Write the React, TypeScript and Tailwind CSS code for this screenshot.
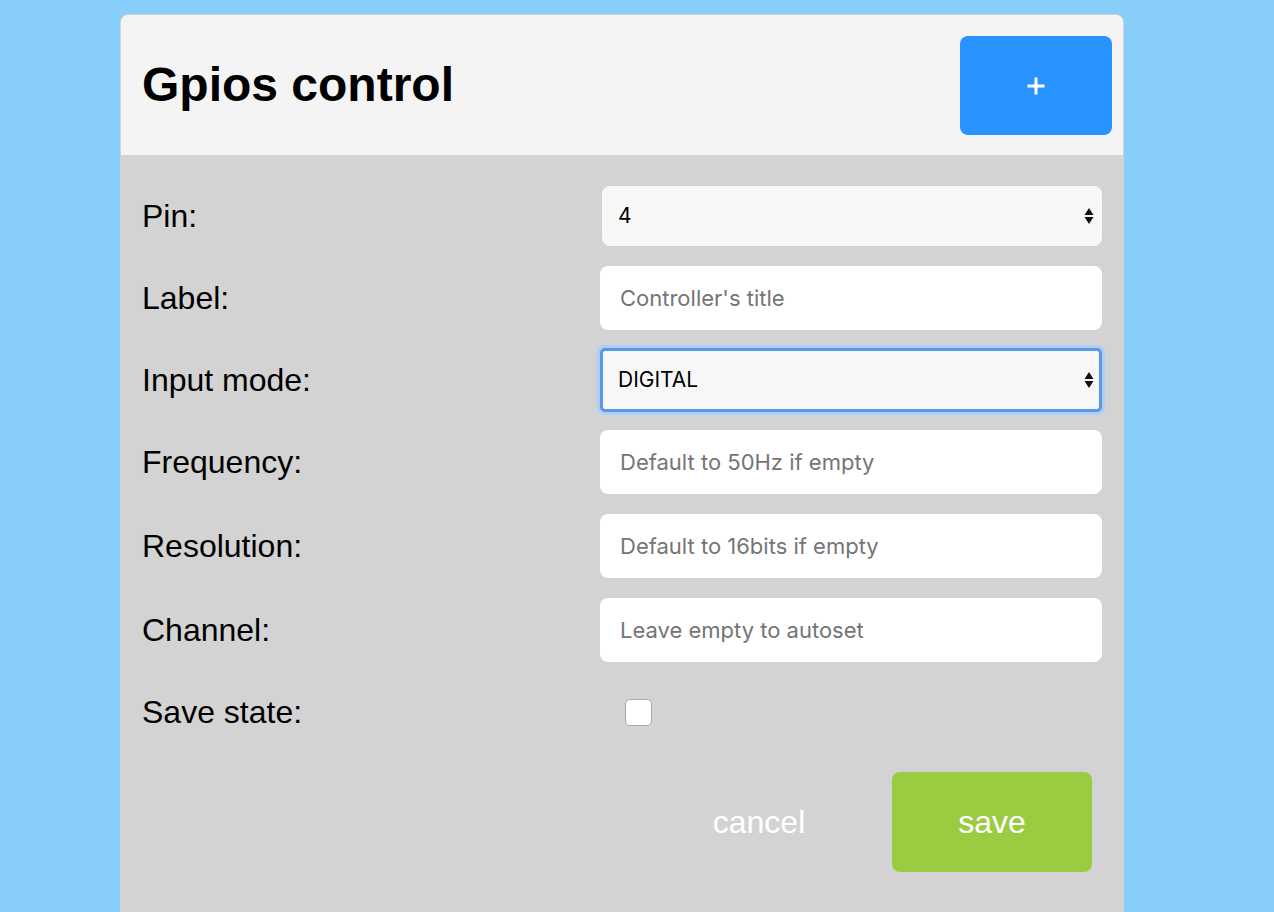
import { useState } from "react"

const fields = [
  { label: "Frequency:", placeholder: "Default to 50Hz if empty", gap: "mt-[18px]" },
  { label: "Resolution:", placeholder: "Default to 16bits if empty", gap: "mt-5" },
  { label: "Channel:", placeholder: "Leave empty to autoset", gap: "mt-5" },
]

function Arrows() {
  return (
    <svg width="10" height="20" viewBox="0 0 10 20" className="pointer-events-none absolute right-[8px] top-1/2 -translate-y-1/2">
      <path d="M5 2 L9.5 9 L0.5 9 Z" fill="#111" />
      <path d="M0.5 11 L9.5 11 L5 18 Z" fill="#111" />
    </svg>
  )
}

function Row({ label, className = "", children }: { label: string; className?: string; children: React.ReactNode }) {
  return (
    <div className={`flex h-16 items-center ${className}`}>
      <label className="w-[458px] text-[32px] text-black">{label}</label>
      <div className="flex-1">{children}</div>
    </div>
  )
}

function TextInput({ placeholder }: { placeholder: string }) {
  return (
    <input
      type="text"
      placeholder={placeholder}
      className="h-16 w-full rounded-lg bg-white px-5 text-[22px] text-black outline-none placeholder:text-[#757575] [font-family:Inter,'Noto_Sans',sans-serif]"
    />
  )
}

export default function App() {
  const [pin, setPin] = useState("4")
  const [mode, setMode] = useState("DIGITAL")
  const [saveState, setSaveState] = useState(false)

  return (
    <div className="min-h-screen bg-[#87cefa] pl-[120px] pt-[14px] font-['Liberation_Sans',Arial,sans-serif]">
      <div className="w-[1004px] overflow-hidden rounded-lg border border-[#d3d3d3] bg-[#d3d3d3]">
        <div className="flex h-[140px] items-start justify-between bg-[#f4f4f4] pl-[21px] pr-[11px]">
          <h1 className="self-center text-[48px] font-bold text-black">Gpios control</h1>
          <button className="mt-[21px] flex h-[99px] w-[152px] items-center justify-center rounded-lg bg-[#2994ff]">
            <svg width="18" height="18" viewBox="0 0 18 18">
              <path d="M9 0.5 V17.5 M0.5 9 H17.5" stroke="#fff" strokeWidth="3" />
            </svg>
          </button>
        </div>

        <div className="flex flex-col pl-[21px] pr-[21px] pt-[29px]">
          <Row label="Pin:">
            <div className="relative ml-[2px]">
              <select
                value={pin}
                onChange={(e) => setPin(e.target.value)}
                className="h-[60px] w-full appearance-none rounded-lg bg-[#f7f7f7] px-4 text-[21px] text-black outline-none [font-family:Inter,'Noto_Sans',sans-serif]"
              >
                <option>4</option>
                <option>5</option>
                <option>12</option>
              </select>
              <Arrows />
            </div>
          </Row>
          <Row label="Label:" className="mt-[18px]">
            <TextInput placeholder="Controller's title" />
          </Row>
          <Row label="Input mode:" className="mt-[18px]">
            <div className="relative">
              <select
                value={mode}
                onChange={(e) => setMode(e.target.value)}
                className="h-16 w-full appearance-none rounded-[5px] border-[3px] border-[#5a97e8] bg-[#f7f7f7] px-[15px] text-[21px] text-black outline-none ring-[3px] ring-[#b0ccf0] [font-family:Inter,'Noto_Sans',sans-serif]"
              >
                <option>DIGITAL</option>
                <option>ANALOG</option>
                <option>PWM</option>
              </select>
              <Arrows />
            </div>
          </Row>
          {fields.map((f) => (
            <Row key={f.label} label={f.label} className={f.gap}>
              <TextInput placeholder={f.placeholder} />
            </Row>
          ))}
          <Row label="Save state:" className="mt-[18px]">
            <input
              type="checkbox"
              checked={saveState}
              onChange={(e) => setSaveState(e.target.checked)}
              className="ml-[25px] block h-[27px] w-[27px] appearance-none rounded-[5px] border border-[#a9a9a9] bg-white checked:bg-[#2994ff]"
            />
          </Row>
        </div>

        <div className="flex justify-end gap-[33px] pb-[60px] pr-[31px] pt-[28px]">
          <button className="h-[100px] w-[200px] text-[32px] text-white">cancel</button>
          <button className="h-[100px] w-[200px] rounded-lg bg-[#9bcb41] text-[32px] text-white">save</button>
        </div>
      </div>
    </div>
  )
}
